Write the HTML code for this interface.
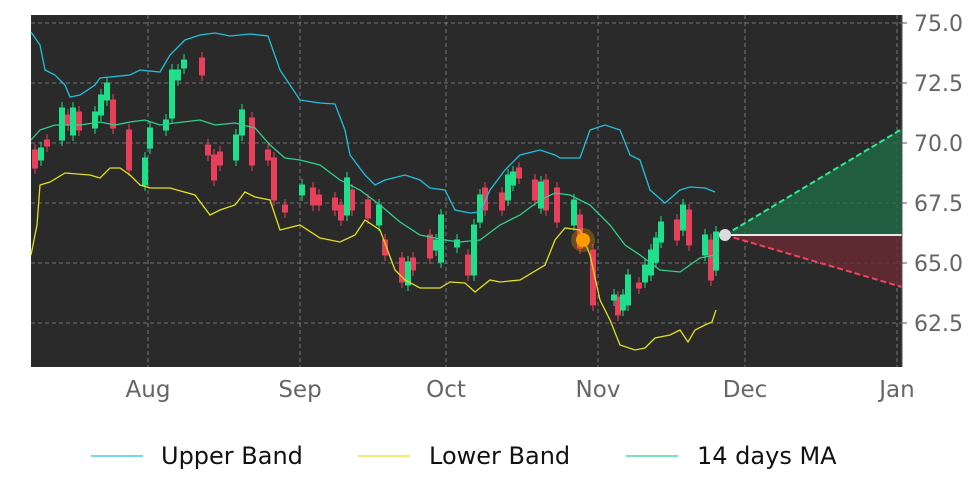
<!DOCTYPE html>
<html><head><style>body{margin:0;background:#fff;}svg{display:block;font-family:"DejaVu Sans","Liberation Sans",sans-serif;}</style></head><body>
<svg width="972" height="486" viewBox="0 0 972 486" xmlns="http://www.w3.org/2000/svg">
<rect x="31" y="15" width="871" height="352" fill="#2a2a2a"/>
<g stroke="#8a8a8a" stroke-width="0.8" stroke-dasharray="4,3">
<line x1="31" x2="902" y1="23" y2="23"/><line x1="31" x2="902" y1="83" y2="83"/><line x1="31" x2="902" y1="143" y2="143"/><line x1="31" x2="902" y1="203" y2="203"/><line x1="31" x2="902" y1="263" y2="263"/><line x1="31" x2="902" y1="323" y2="323"/>
<line y1="15" y2="367" x1="148" x2="148"/><line y1="15" y2="367" x1="300" x2="300"/><line y1="15" y2="367" x1="446" x2="446"/><line y1="15" y2="367" x1="598" x2="598"/><line y1="15" y2="367" x1="745" x2="745"/><line y1="15" y2="367" x1="897" x2="897"/>
</g>
<polygon points="725,235 902,129 902,235" fill="#1f6b45" opacity="0.8"/>
<polygon points="725,235 902,287 902,235" fill="#6b2a35" opacity="0.8"/>
<g stroke="#e8405a" fill="#e8405a">
<path d="M35 144V174M47 134V152M68 109V131M79 106V136M113 94V134M129 124V176M202 52V81M208 139V161M214 149V186M220 146V171M252 112V171M268 144V166M274 152V206M285 199V218M313 182V211M319 189V211M335 192V216M341 199V226M352 184V216M368 194V224M385 234V261M402 252V288M413 252V276M430 229V264M468 249V281M485 182V216M502 187V216M519 162V184M535 174V206M546 174V216M557 182V228M580 209V254M593 244V311M618 291V321M639 277V294M677 214V246M689 204V251M711 234V286"/>
<rect x="32.5" y="150" width="5" height="18"/><rect x="44.5" y="140" width="5" height="6"/><rect x="65.5" y="115" width="5" height="10"/><rect x="76.5" y="112" width="5" height="18"/><rect x="110.5" y="100" width="5" height="28"/><rect x="126.5" y="130" width="5" height="40"/><rect x="199.5" y="58" width="5" height="17"/><rect x="205.5" y="145" width="5" height="10"/><rect x="211.5" y="155" width="5" height="25"/><rect x="217.5" y="152" width="5" height="13"/><rect x="249.5" y="118" width="5" height="47"/><rect x="265.5" y="150" width="5" height="10"/><rect x="271.5" y="158" width="5" height="42"/><rect x="282.5" y="205" width="5" height="7"/><rect x="310.5" y="188" width="5" height="17"/><rect x="316.5" y="195" width="5" height="10"/><rect x="332.5" y="198" width="5" height="12"/><rect x="338.5" y="205" width="5" height="15"/><rect x="349.5" y="190" width="5" height="20"/><rect x="365.5" y="200" width="5" height="18"/><rect x="382.5" y="240" width="5" height="15"/><rect x="399.5" y="258" width="5" height="24"/><rect x="410.5" y="258" width="5" height="12"/><rect x="427.5" y="235" width="5" height="23"/><rect x="465.5" y="255" width="5" height="20"/><rect x="482.5" y="188" width="5" height="22"/><rect x="499.5" y="193" width="5" height="17"/><rect x="516.5" y="168" width="5" height="10"/><rect x="532.5" y="180" width="5" height="20"/><rect x="543.5" y="180" width="5" height="30"/><rect x="554.5" y="188" width="5" height="34"/><rect x="577.5" y="215" width="5" height="33"/><rect x="590.5" y="250" width="5" height="55"/><rect x="615.5" y="297" width="5" height="18"/><rect x="636.5" y="283" width="5" height="5"/><rect x="674.5" y="220" width="5" height="20"/><rect x="686.5" y="210" width="5" height="35"/><rect x="708.5" y="240" width="5" height="40"/>
</g>
<g stroke="#1fe08a" fill="#1fe08a">
<path d="M41 142V166M62 102V146M73 102V141M95 106V134M101 89V121M107 77V106M145 152V191M150 122V154M166 114V136M172 64V124M178 64V86M184 54V74M236 129V166M242 104V141M302 179V201M347 172V221M379 199V231M408 256V291M436 234V256M441 209V268M457 234V253M474 219V281M480 189V228M508 169V206M513 166V191M541 176V214M574 194V231M614 289V306M623 289V316M628 269V311M645 259V288M651 244V281M656 232V268M661 216V248M683 199V236M705 229V261M716 226V276"/>
<rect x="38.5" y="148" width="5" height="12"/><rect x="59.5" y="108" width="5" height="32"/><rect x="70.5" y="108" width="5" height="27"/><rect x="92.5" y="112" width="5" height="16"/><rect x="98.5" y="95" width="5" height="20"/><rect x="104.5" y="83" width="5" height="17"/><rect x="142.5" y="158" width="5" height="27"/><rect x="147.5" y="128" width="5" height="20"/><rect x="163.5" y="120" width="5" height="10"/><rect x="169.5" y="70" width="5" height="48"/><rect x="175.5" y="70" width="5" height="10"/><rect x="181.5" y="60" width="5" height="8"/><rect x="233.5" y="135" width="5" height="25"/><rect x="239.5" y="110" width="5" height="25"/><rect x="299.5" y="185" width="5" height="10"/><rect x="344.5" y="178" width="5" height="37"/><rect x="376.5" y="205" width="5" height="20"/><rect x="405.5" y="262" width="5" height="23"/><rect x="433.5" y="240" width="5" height="10"/><rect x="438.5" y="215" width="5" height="47"/><rect x="454.5" y="240" width="5" height="7"/><rect x="471.5" y="225" width="5" height="50"/><rect x="477.5" y="195" width="5" height="27"/><rect x="505.5" y="175" width="5" height="25"/><rect x="510.5" y="172" width="5" height="13"/><rect x="538.5" y="182" width="5" height="26"/><rect x="571.5" y="200" width="5" height="25"/><rect x="611.5" y="295" width="5" height="5"/><rect x="620.5" y="295" width="5" height="15"/><rect x="625.5" y="275" width="5" height="30"/><rect x="642.5" y="265" width="5" height="17"/><rect x="648.5" y="250" width="5" height="25"/><rect x="653.5" y="238" width="5" height="24"/><rect x="658.5" y="222" width="5" height="20"/><rect x="680.5" y="205" width="5" height="25"/><rect x="702.5" y="235" width="5" height="20"/><rect x="713.5" y="232" width="5" height="38"/>
</g>
<g fill="none" stroke-width="1.3">
<polyline stroke="#20c0dc" points="31,32 40,45 45,70 55,75 65,85 70,97 80,95 95,85 100,78 130,75 140,70 160,72 170,55 185,40 200,35 215,33 230,36 250,34 268,36 280,70 300,100 320,103 335,104 345,130 350,155 365,175 375,185 385,180 405,175 420,180 430,188 445,190 455,210 470,213 480,212 490,190 505,170 520,155 540,150 555,155 560,158 580,158 590,130 605,125 620,130 630,155 640,160 650,190 665,203 680,190 690,187 705,188 715,192"/>
<polyline stroke="#e0e020" points="31,255 37,225 40,185 50,182 65,173 90,175 100,178 110,168 120,168 130,175 140,185 150,188 170,188 195,195 210,215 220,210 235,205 245,192 255,197 270,200 280,230 300,225 320,238 340,242 355,235 365,220 380,230 395,270 405,280 420,288 440,288 450,282 465,283 475,292 490,280 500,282 520,280 545,265 555,240 565,228 580,230 590,255 600,300 610,320 620,345 635,350 645,348 655,338 670,335 680,330 688,342 695,330 705,325 712,322 716,310"/>
<polyline stroke="#2ed08c" points="31,140 40,130 55,125 80,125 100,122 115,125 130,122 145,120 160,125 175,123 200,120 215,125 235,123 255,128 270,145 285,158 300,160 320,165 340,180 360,190 380,205 400,222 420,235 445,240 460,242 480,240 500,225 520,215 540,200 555,193 570,195 590,205 600,215 610,225 625,245 640,255 660,270 680,272 700,258 715,255"/>
</g>
<line x1="725" y1="235" x2="902" y2="235" stroke="#e8e8e8" stroke-width="2"/>
<line x1="725" y1="235" x2="902" y2="129" stroke="#2ee890" stroke-width="2" stroke-dasharray="6,3"/>
<line x1="725" y1="235" x2="902" y2="287" stroke="#f04060" stroke-width="2" stroke-dasharray="6,3"/>
<circle cx="583" cy="240" r="12" fill="#ff9900" opacity="0.3"/>
<circle cx="583" cy="240" r="7" fill="#ff9c00"/>
<circle cx="725" cy="235" r="6" fill="#dcdcdc"/>
<g stroke="#555" stroke-width="1"><line x1="902" y1="15" x2="902" y2="367"/>
<line x1="902" x2="907" y1="23" y2="23"/><line x1="902" x2="907" y1="83" y2="83"/><line x1="902" x2="907" y1="143" y2="143"/><line x1="902" x2="907" y1="203" y2="203"/><line x1="902" x2="907" y1="263" y2="263"/><line x1="902" x2="907" y1="323" y2="323"/></g>
<g fill="#666" font-size="22">
<text x="914" y="31">75.0</text><text x="914" y="91">72.5</text><text x="914" y="151">70.0</text><text x="914" y="211">67.5</text><text x="914" y="271">65.0</text><text x="914" y="331">62.5</text>
</g>
<g fill="#666" font-size="23" text-anchor="middle">
<text x="148" y="397">Aug</text><text x="300" y="397">Sep</text><text x="446" y="397">Oct</text><text x="598" y="397">Nov</text><text x="745" y="397">Dec</text><text x="897" y="397">Jan</text>
</g>
<g font-size="24" fill="#111">
<line x1="91" x2="143" y1="456" y2="456" stroke="#20c0dc" stroke-width="1.3"/><text x="161" y="464">Upper Band</text>
<line x1="358" x2="410" y1="456" y2="456" stroke="#e0e020" stroke-width="1.3"/><text x="429" y="464">Lower Band</text>
<line x1="626" x2="678" y1="456" y2="456" stroke="#2ed08c" stroke-width="1.3"/><text x="697" y="464">14 days MA</text>
</g>
</svg>
</body></html>
